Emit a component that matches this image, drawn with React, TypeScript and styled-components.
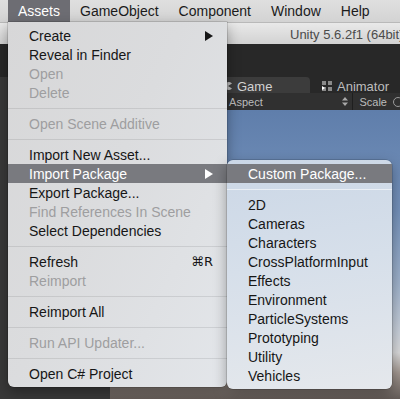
import React from "react";
import styled, { createGlobalStyle } from "styled-components";

const Global = createGlobalStyle`
  html, body { margin: 0; padding: 0; background: #2a2a2a; }
  body { width: 400px; height: 399px; overflow: hidden; font-family: "Liberation Sans", Arial, sans-serif; }
`;

const Screen = styled.div`
  position: relative;
  width: 400px;
  height: 399px;
  overflow: hidden;
  display: flex;
  flex-direction: column;
`;

const MenuBar = styled.div`
  height: 22px;
  flex: none;
  display: flex;
  align-items: stretch;
  padding-left: 8px;
  background: linear-gradient(#dfdfdf, #d3d3d3);
  font-size: 14px;
  color: #1b1b1b;
`;

const MenuTitle = styled.div<{ $active?: boolean }>`
  padding: 0 10px;
  display: flex;
  align-items: center;
  background: ${(p) => (p.$active ? "#6d6d73" : "transparent")};
  color: ${(p) => (p.$active ? "#ffffff" : "#1b1b1b")};
`;

const TitleBar = styled.div`
  height: 22px;
  flex: none;
  box-sizing: border-box;
  border-top: 1px solid #b9b9b9;
  background: linear-gradient(#e9e9e9, #d2d2d2);
  display: flex;
  align-items: center;
  padding: 2px 0 0 290px;
  font-size: 13px;
  color: #4b4b4b;
  white-space: nowrap;
  overflow: hidden;
`;

const Toolbar = styled.div`
  height: 33px;
  flex: none;
  background: #282828;
`;

const Workspace = styled.div`
  flex: 1;
  display: flex;
  min-height: 0;
`;

const LeftPanel = styled.div`
  width: 110px;
  flex: none;
  background: #393939;
`;

const GameView = styled.div`
  flex: 1;
  display: flex;
  flex-direction: column;
  min-width: 0;
`;

const TabRow = styled.div`
  height: 16px;
  flex: none;
  display: flex;
  align-items: stretch;
  background: #282828;
  padding-left: 106px;
  font-size: 13px;
`;

const Tab = styled.div<{ $active?: boolean }>`
  width: ${(p) => (p.$active ? "94px" : "auto")};
  box-sizing: border-box;
  display: flex;
  align-items: center;
  gap: 5px;
  padding: 2px 0 0 ${(p) => (p.$active ? "8px" : "12px")};
  background: ${(p) => (p.$active ? "#3c3c3c" : "transparent")};
  border-radius: 0 4px 0 0;
  color: ${(p) => (p.$active ? "#d2d2d2" : "#bdbdbd")};
  white-space: nowrap;
`;

const GameToolbar = styled.div`
  height: 17px;
  flex: none;
  display: flex;
  align-items: center;
  background: #303030;
  font-size: 11px;
  color: #bcbcbc;
  white-space: nowrap;
`;

const AspectField = styled.div`
  margin-left: 94px;
  width: 160px;
  height: 100%;
  display: flex;
  align-items: center;
  justify-content: space-between;
  padding-right: 4px;
  box-sizing: border-box;
  border-right: 1px solid #1f1f1f;
`;

const ScaleLabel = styled.div`
  margin-left: 6px;
  display: flex;
  align-items: center;
  gap: 5px;
`;

const Scene = styled.div`
  flex: 1;
  background: linear-gradient(
    180deg,
    #5f7eab 0%,
    #7491ba 35%,
    #9fb2cb 60%,
    #c9d0da 77%,
    #d9d9da 84%,
    #a1968f 91%,
    #645c58 100%
  );
`;

const DropMenu = styled.div<{ $sub?: boolean }>`
  position: absolute;
  box-sizing: border-box;
  padding: 4px 0;
  font-size: 14px;
  border-radius: ${(p) => (p.$sub ? "6px" : "0 0 6px 6px")};
  background: ${(p) =>
    p.$sub
      ? "linear-gradient(172deg, #cbd7e6 0%, #d6dfea 45%, #e5e8ec 100%)"
      : "linear-gradient(115deg, #d7d7d8 0%, #dbdcde 45%, #e3e6ea 100%)"};
  box-shadow: 0 0 0 0.5px rgba(0, 0, 0, 0.25), 0 5px 14px rgba(0, 0, 0, 0.35);
`;

const MainMenu = styled(DropMenu)`
  left: 8px;
  top: 22px;
  width: 219px;
`;

const SubMenu = styled(DropMenu)`
  left: 227px;
  top: 160px;
  width: 165px;
`;

const Row = styled.div<{ $disabled?: boolean; $hl?: boolean }>`
  height: 19px;
  display: flex;
  align-items: center;
  justify-content: space-between;
  padding: 0 14px 0 21px;
  white-space: nowrap;
  background: ${(p) => (p.$hl ? "#797a7f" : "transparent")};
  color: ${(p) => (p.$hl ? "#ffffff" : p.$disabled ? "#9e9ea0" : "#161616")};
`;

const Shortcut = styled.span`
  font-family: "DejaVu Sans", "Liberation Sans", sans-serif;
  font-size: 13px;
`;

const Separator = styled.div<{ $light?: boolean }>`
  height: 12px;
  display: flex;
  align-items: center;
  &::after {
    content: "";
    flex: 1;
    height: 1px;
    background: ${(p) => (p.$light ? "rgba(255,255,255,0.55)" : "rgba(0,0,0,0.09)")};
  }
`;

const Arrow = ({ color }: { color: string }) => (
  <svg width="8" height="10" viewBox="0 0 8 10">
    <path d="M0 0 L8 5 L0 10 Z" fill={color} />
  </svg>
);

type Item = { label?: string; disabled?: boolean; hl?: boolean; sub?: boolean; key?: string; sep?: boolean };

const mainItems: Item[] = [
  { label: "Create", sub: true },
  { label: "Reveal in Finder" },
  { label: "Open", disabled: true },
  { label: "Delete", disabled: true },
  { sep: true },
  { label: "Open Scene Additive", disabled: true },
  { sep: true },
  { label: "Import New Asset..." },
  { label: "Import Package", sub: true, hl: true },
  { label: "Export Package..." },
  { label: "Find References In Scene", disabled: true },
  { label: "Select Dependencies" },
  { sep: true },
  { label: "Refresh", key: "⌘R" },
  { label: "Reimport", disabled: true },
  { sep: true },
  { label: "Reimport All" },
  { sep: true },
  { label: "Run API Updater...", disabled: true },
  { sep: true },
  { label: "Open C# Project" },
];

const subItems: Item[] = [
  { label: "Custom Package...", hl: true },
  { sep: true },
  { label: "2D" },
  { label: "Cameras" },
  { label: "Characters" },
  { label: "CrossPlatformInput" },
  { label: "Effects" },
  { label: "Environment" },
  { label: "ParticleSystems" },
  { label: "Prototyping" },
  { label: "Utility" },
  { label: "Vehicles" },
];

const renderItems = (items: Item[], lightSep = false) =>
  items.map((it, i) =>
    it.sep ? (
      <Separator key={i} $light={lightSep} />
    ) : (
      <Row key={i} $disabled={it.disabled} $hl={it.hl}>
        <span>{it.label}</span>
        {it.sub && <Arrow color={it.hl ? "#ffffff" : "#161616"} />}
        {it.key && <Shortcut>{it.key}</Shortcut>}
      </Row>
    )
  );

const GameIcon = () => (
  <svg width="8" height="8" viewBox="0 0 8 8">
    <path d="M4 4 L8 1.5 A4 4 0 1 0 8 6.5 Z" fill="#b8b8b8" />
  </svg>
);

const AnimatorIcon = () => (
  <svg width="10" height="10" viewBox="0 0 10 10">
    <rect x="0" y="0" width="4" height="4" fill="#8a8a8a" />
    <rect x="6" y="0" width="4" height="4" fill="#8a8a8a" />
    <rect x="0" y="6" width="4" height="4" fill="#8a8a8a" />
    <rect x="6" y="6" width="4" height="4" fill="#8a8a8a" />
    <path d="M0 5 L3 7 L0 9 Z" fill="#ffffff" />
  </svg>
);

const UpDown = () => (
  <svg width="6" height="9" viewBox="0 0 6 9">
    <path d="M3 0 L6 3.5 L0 3.5 Z M0 5.5 L6 5.5 L3 9 Z" fill="#a8a8a8" />
  </svg>
);

const Knob = () => (
  <svg width="8" height="10" viewBox="0 0 8 10">
    <circle cx="6" cy="5" r="4.5" fill="none" stroke="#9a9a9a" strokeWidth="1" />
  </svg>
);

export default function App() {
  return (
    <>
      <Global />
      <Screen>
        <MenuBar>
          <MenuTitle $active>Assets</MenuTitle>
          <MenuTitle>GameObject</MenuTitle>
          <MenuTitle>Component</MenuTitle>
          <MenuTitle>Window</MenuTitle>
          <MenuTitle>Help</MenuTitle>
        </MenuBar>
        <TitleBar>Unity 5.6.2f1 (64bit) - Untitled - Project - PC, Mac &amp; Linux Standalone</TitleBar>
        <Toolbar />
        <Workspace>
          <LeftPanel />
          <GameView>
            <TabRow>
              <Tab $active>
                <GameIcon />
                Game
              </Tab>
              <Tab>
                <AnimatorIcon />
                Animator
              </Tab>
            </TabRow>
            <GameToolbar>
              <AspectField>
                <span>Free Aspect</span>
                <UpDown />
              </AspectField>
              <ScaleLabel>
                Scale
                <Knob />
              </ScaleLabel>
            </GameToolbar>
            <Scene />
          </GameView>
        </Workspace>
        <MainMenu>{renderItems(mainItems)}</MainMenu>
        <SubMenu $sub>{renderItems(subItems, true)}</SubMenu>
      </Screen>
    </>
  );
}
